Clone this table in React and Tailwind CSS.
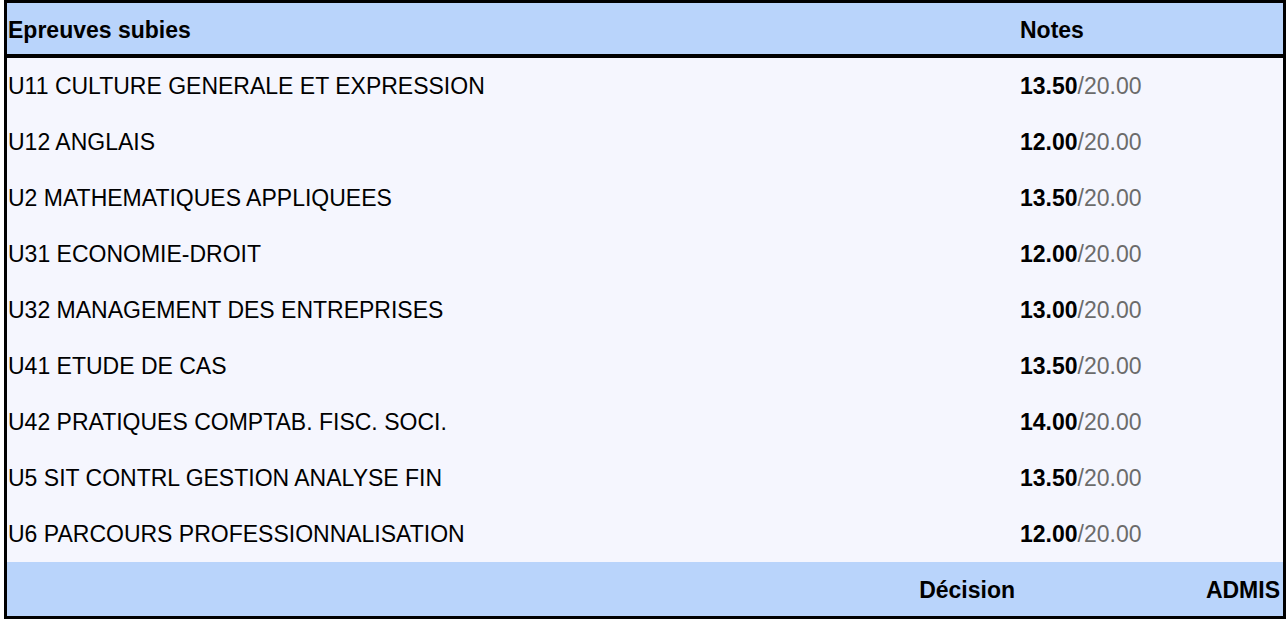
const rows = [
  ['U11 CULTURE GENERALE ET EXPRESSION', '13.50'],
  ['U12 ANGLAIS', '12.00'],
  ['U2 MATHEMATIQUES APPLIQUEES', '13.50'],
  ['U31 ECONOMIE-DROIT', '12.00'],
  ['U32 MANAGEMENT DES ENTREPRISES', '13.00'],
  ['U41 ETUDE DE CAS', '13.50'],
  ['U42 PRATIQUES COMPTAB. FISC. SOCI.', '14.00'],
  ['U5 SIT CONTRL GESTION ANALYSE FIN', '13.50'],
  ['U6 PARCOURS PROFESSIONNALISATION', '12.00'],
];

export default function App() {
  return (
    <div className="w-[1288px] h-[626px] bg-white pl-1 font-['Liberation_Sans',Arial,sans-serif] text-[23px] text-black">
      <div className="w-[1282px] border-[3px] border-black">
        {/* header */}
        <div className="grid grid-cols-[1009px_1fr] h-[55px] items-center pt-1 bg-[#b9d4fb] border-b-4 border-black font-bold">
          <div className="pl-px">Epreuves subies</div>
          <div className="pl-[4px]">Notes</div>
        </div>

        {/* rows */}
        {rows.map(([label, note]) => (
          <div key={label} className="grid grid-cols-[1009px_1fr] h-[56px] items-center bg-[#f5f6fe]">
            <div className="pl-px">{label}</div>
            <div className="pl-[4px]">
              <span className="font-bold">{note}</span>
              <span className="text-[#6b6b6b]">/20.00</span>
            </div>
          </div>
        ))}

        {/* footer */}
        <div className="grid grid-cols-[1009px_1fr] h-[54px] items-center pt-0.5 bg-[#b9d4fb] font-bold">
          <div className="text-right pr-[1px]">Décision</div>
          <div className="text-right pr-[3px]">ADMIS</div>
        </div>
      </div>
    </div>
  );
}
